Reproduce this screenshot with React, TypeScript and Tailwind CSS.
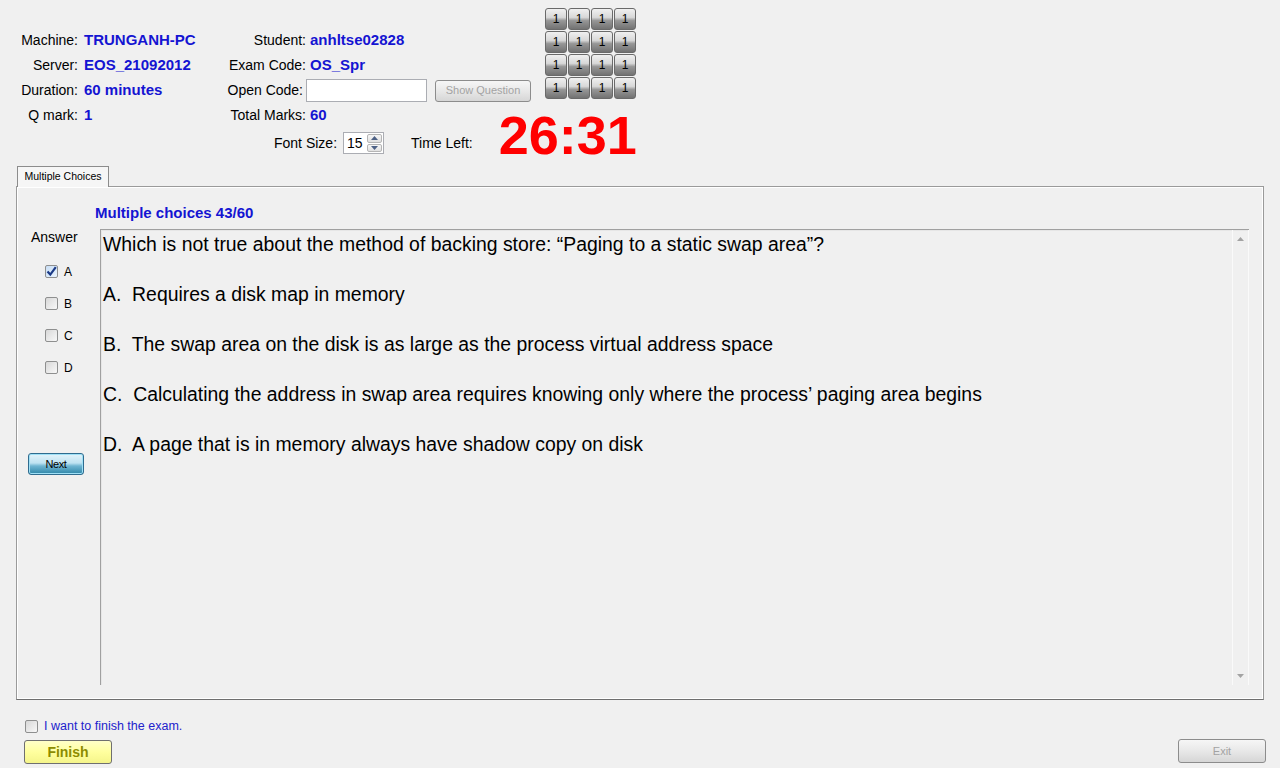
import React from 'react';

const BLUE = 'text-[#1414d2]';

function Check({ checked = false }: { checked?: boolean }) {
  return (
    <span
      className={
        'flex h-[13px] w-[13px] shrink-0 items-center justify-center rounded-[2px] border border-[#8e8f8f] ' +
        (checked
          ? 'bg-[linear-gradient(135deg,#c9def5_0%,#eaf3fd_100%)]'
          : 'bg-[linear-gradient(135deg,#d8d8d8_0%,#f8f8f8_100%)]')
      }
    >
      {checked && (
        <svg width="11" height="11" viewBox="0 0 11 11">
          <path d="M1.5 5.5 L4.3 8.6 L9.8 1.2" stroke="#1b3a86" strokeWidth="2.2" fill="none" />
        </svg>
      )}
    </span>
  );
}

const infoLeft = [
  ['Machine:', 'TRUNGANH-PC'],
  ['Server:', 'EOS_21092012'],
  ['Duration:', '60 minutes'],
  ['Q mark:', '1'],
];

const lines = [
  'Which is not true about the method of backing store: \u201CPaging to a static swap area\u201D?',
  'A.  Requires a disk map in memory',
  'B.  The swap area on the disk is as large as the process virtual address space',
  'C.  Calculating the address in swap area requires knowing only where the process\u2019 paging area begins',
  'D.  A page that is in memory always have shadow copy on disk',
];

export default function App() {
  return (
    <div className="flex h-[768px] w-[1280px] flex-col overflow-hidden bg-[#f0f0f0] font-['Liberation_Sans',Arial,sans-serif] text-black">
      {/* Header */}
      <div className="flex h-[166px]">
        <div className="w-[220px] pt-[28px] text-[14px]">
          {infoLeft.map(([label, value]) => (
            <div key={label} className="flex h-[25px] items-center">
              <span className="w-[78px] text-right">{label}</span>
              <span className={'ml-[6px] text-[15px] font-bold ' + BLUE}>{value}</span>
            </div>
          ))}
        </div>

        <div className="flex flex-col">
          <div className="flex h-[128px]">
            <div className="w-[325px] pt-[28px] text-[14px]">
              <div className="flex h-[25px] items-center">
                <span className="w-[86px] text-right">Student:</span>
                <span className={'ml-[4px] text-[15px] font-bold ' + BLUE}>anhltse02828</span>
              </div>
              <div className="flex h-[25px] items-center">
                <span className="w-[86px] text-right">Exam Code:</span>
                <span className={'ml-[4px] text-[15px] font-bold ' + BLUE}>OS_Spr</span>
              </div>
              <div className="flex h-[25px] items-center">
                <span className="w-[83px] text-right">Open Code:</span>
                <span className="ml-[3px] h-[23px] w-[121px] border border-[#abadb3] bg-white" />
                <button className="ml-[8px] h-[22px] w-[96px] rounded-[3px] border border-[#8c8c8c] bg-[linear-gradient(to_bottom,#f6f6f6_0%,#e8e8e8_50%,#d6d6d6_100%)] text-[11px] text-[#a3a3a3]">
                  Show Question
                </button>
              </div>
              <div className="flex h-[25px] items-center">
                <span className="w-[86px] text-right">Total Marks:</span>
                <span className={'ml-[4px] text-[15px] font-bold ' + BLUE}>60</span>
              </div>
            </div>

            <div className="mt-[8px] grid h-fit grid-cols-4 gap-[1px]">
              {Array.from({ length: 16 }).map((_, i) => (
                <button
                  key={i}
                  className="flex h-[22px] w-[22px] items-center justify-center rounded-[3px] border border-[#6a6a6a] bg-[linear-gradient(to_bottom,#f0f0f0_0%,#d8d8d8_42%,#979797_58%,#727272_100%)] text-[12px] leading-none text-black"
                >
                  1
                </button>
              ))}
            </div>
          </div>

          <div className="ml-[54px] mt-[4px] flex h-[22px] items-center text-[14px]">
            <span>Font Size:</span>
            <div className="ml-[6px] flex h-[22px] w-[41px] items-stretch border border-[#abadb3] bg-white">
              <span className="flex flex-1 items-center pl-[3px] text-[14px]">15</span>
              <div className="my-[1px] mr-[1px] flex w-[15px] flex-col gap-[1px]">
                <span className="flex flex-1 items-center justify-center rounded-[2px] border border-[#b5b5b5] bg-[linear-gradient(to_bottom,#f6f6f6,#e0e0e0)]">
                  <svg width="7" height="4" viewBox="0 0 7 4"><path d="M0 4 L3.5 0 L7 4 Z" fill="#4d6185" /></svg>
                </span>
                <span className="flex flex-1 items-center justify-center rounded-[2px] border border-[#b5b5b5] bg-[linear-gradient(to_bottom,#f6f6f6,#e0e0e0)]">
                  <svg width="7" height="4" viewBox="0 0 7 4"><path d="M0 0 L3.5 4 L7 0 Z" fill="#4d6185" /></svg>
                </span>
              </div>
            </div>
            <span className="ml-[27px]">Time Left:</span>
            <span className="-mt-[16px] ml-[26px] text-[54px] font-bold leading-none text-[#ff0000]">26:31</span>
          </div>
        </div>
      </div>

      {/* Tab */}
      <div className="relative z-10 -mb-[1px] ml-[17px] flex h-[21px] w-[92px] items-center justify-center border border-b-0 border-[#8c8c8c] bg-[#f6f6f6] text-[10.5px]">
        Multiple Choices
      </div>

      {/* Panel */}
      <div className="ml-[16px] flex h-[514px] w-[1248px] flex-col border border-[#9a9a9a] border-b-[#6e6e6e] shadow-[inset_1px_1px_0_#ffffff,inset_-1px_-1px_0_#ffffff]">
        <div className={'h-[42px] pl-[78px] pt-[17px] text-[15px] font-bold leading-[17px] ' + BLUE}>
          Multiple choices 43/60
        </div>
        <div className="flex">
          <div className="flex w-[83px] flex-col">
            <div className="pl-[14px] text-[14px] leading-[16px]">Answer</div>
            <div className="mt-[20px] flex flex-col gap-[19px] pl-[28px]">
              {['A', 'B', 'C', 'D'].map((l, i) => (
                <div key={l} className="flex h-[13px] items-center">
                  <Check checked={i === 0} />
                  <span className="ml-[6px] text-[12px]">{l}</span>
                </div>
              ))}
            </div>
            <button className="ml-[11px] mt-[79px] h-[22px] w-[56px] rounded-[3px] border border-[#2f6c8f] bg-[linear-gradient(to_bottom,#e3f3fa_0%,#bfe3f2_45%,#6fb5d2_60%,#2e86a8_100%)] text-[11px] tracking-[-0.4px] text-black shadow-[inset_0_0_0_1px_#9fe0f6]">
              Next
            </button>
          </div>

          <div className="flex h-[456px] w-[1149px] border-l border-t border-[#a0a0a0] border-b-white border-r-white shadow-[inset_1px_1px_0_#e6e6e6]">
            <div className="flex-1 pl-[2px] pt-[2px] text-[19.4px] leading-[25px]">
              {lines.map((t, i) => (
                <div key={i} className={'whitespace-pre ' + (i > 0 ? 'mt-[25px]' : '')}>
                  {t}
                </div>
              ))}
            </div>
            <div className="flex w-[17px] flex-col items-center justify-between border-l border-r border-[#fafafa] py-[7px]">
              <svg width="7" height="4" viewBox="0 0 7 4"><path d="M0 4 L3.5 0 L7 4 Z" fill="#a3a3a3" /></svg>
              <svg width="7" height="4" viewBox="0 0 7 4"><path d="M0 0 L3.5 4 L7 0 Z" fill="#a3a3a3" /></svg>
            </div>
          </div>
        </div>
      </div>

      {/* Footer */}
      <div className="flex items-end justify-between pl-[24px] pr-[14px]">
        <div className="flex flex-col">
          <div className="ml-[1px] mt-[20px] flex h-[13px] items-center">
            <Check />
            <span className="ml-[6px] text-[12.5px] text-[#2222cc]">I want to finish the exam.</span>
          </div>
          <button className="mt-[7px] h-[24px] w-[88px] rounded-[3px] border border-[#6f6f6f] bg-[linear-gradient(to_bottom,#ffffc8_0%,#ffff9e_50%,#f5f58a_100%)] text-[14px] font-bold text-[#8c8c00]">
            Finish
          </button>
        </div>
        <button className="mb-[1px] h-[24px] w-[88px] rounded-[3px] border border-[#8c8c8c] bg-[linear-gradient(to_bottom,#f6f6f6_0%,#e8e8e8_50%,#d6d6d6_100%)] text-[11px] text-[#a3a3a3]">
          Exit
        </button>
      </div>
    </div>
  );
}
